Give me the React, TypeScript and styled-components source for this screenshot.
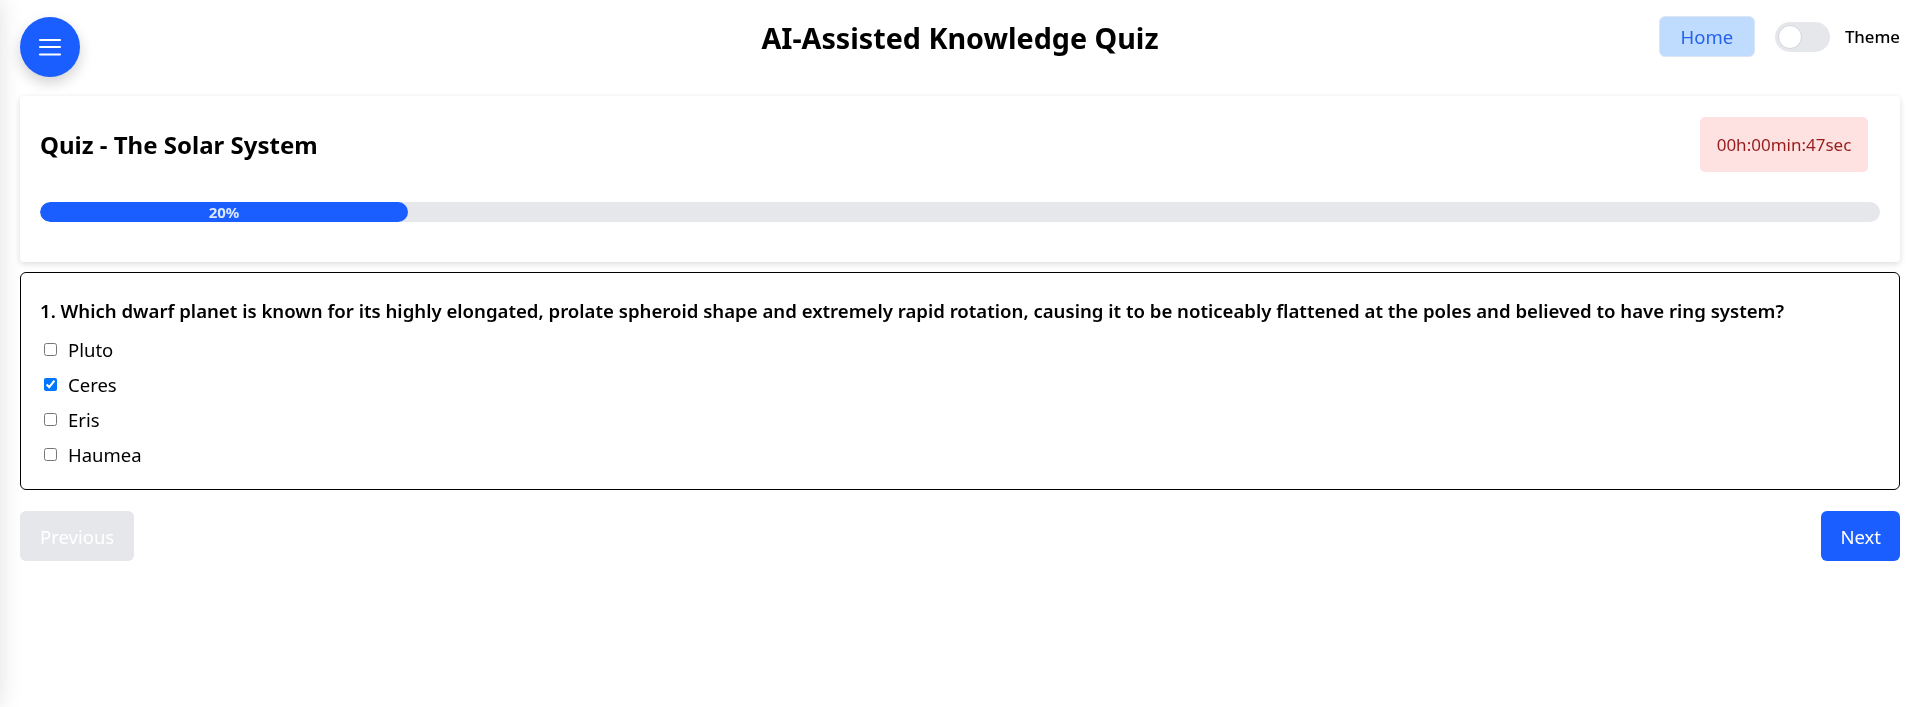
import React, { useState } from "react";
import styled, { createGlobalStyle } from "styled-components";

const GlobalStyle = createGlobalStyle`
  body {
    margin: 0;
    background: #ffffff;
    font-family: "Noto Sans", "Open Sans", sans-serif;
    color: #000;
  }
  * { box-sizing: border-box; }
`;

const Page = styled.div`
  position: relative;
  min-height: 100vh;
  padding: 0 16px 0 20px;
`;

// offscreen drawer, only its shadow shows at the left edge
const Drawer = styled.aside`
  position: fixed;
  top: 0;
  left: -280px;
  width: 280px;
  height: 100vh;
  background: #fff;
  box-shadow: 0 0 22px rgba(0, 0, 0, 0.12);
`;

const MenuButton = styled.button`
  position: absolute;
  top: 17px;
  left: 20px;
  width: 60px;
  height: 60px;
  border: none;
  border-radius: 50%;
  background: #1a5eff;
  display: flex;
  align-items: center;
  justify-content: center;
  box-shadow: 0 6px 14px rgba(0, 0, 0, 0.18);
  cursor: pointer;
  z-index: 2;
`;

const Header = styled.header`
  height: 96px;
  padding-top: 16px;
  display: grid;
  grid-template-columns: 1fr auto 1fr;
  align-items: start;
`;

const Title = styled.h1`
  grid-column: 2;
  margin: 0;
  font-size: 28.7px;
  line-height: 44px;
  font-weight: 700;
`;

const Controls = styled.div`
  grid-column: 3;
  justify-self: end;
  display: flex;
  align-items: center;
`;

const HomeButton = styled.button`
  width: 96px;
  height: 41px;
  border: 1px solid #dbe6f5;
  border-radius: 6px;
  background: #bfdbfe;
  color: #2563eb;
  font-family: inherit;
  font-size: 18.5px;
  cursor: pointer;
`;

const Switch = styled.button<{ $on: boolean }>`
  position: relative;
  width: 55px;
  height: 30px;
  margin-left: 20px;
  border: none;
  border-radius: 15px;
  background: ${(p) => (p.$on ? "#1a5eff" : "#e5e7eb")};
  padding: 0;
  cursor: pointer;
`;

const Knob = styled.span<{ $on: boolean }>`
  position: absolute;
  top: 3px;
  left: ${(p) => (p.$on ? "28px" : "3px")};
  width: 24px;
  height: 24px;
  border-radius: 50%;
  background: #fff;
  border: 1px solid #d1d5db;
`;

const ThemeLabel = styled.span`
  margin-left: 15px;
  font-size: 16.8px;
  font-weight: 500;
`;

const Card = styled.section`
  background: #fff;
  padding: 21px 20px 40px;
  box-shadow: 0 2px 6px rgba(0, 0, 0, 0.14);
  border-radius: 4px;
`;

const CardHead = styled.div`
  display: flex;
  align-items: center;
  justify-content: space-between;
  padding-right: 12px;
  margin-bottom: 30px;
`;

const QuizTitle = styled.h2`
  margin: 0;
  font-size: 24px;
  font-weight: 700;
`;

const Timer = styled.div`
  width: 168px;
  height: 55px;
  display: flex;
  align-items: center;
  justify-content: center;
  border-radius: 5px;
  background: #fee2e2;
  color: #991b1b;
  font-size: 17px;
`;

const Track = styled.div`
  height: 20px;
  border-radius: 10px;
  background: #e5e7eb;
  overflow: hidden;
`;

const Fill = styled.div`
  height: 100%;
  border-radius: 10px;
  background: #1a5eff;
  color: #dbe7ff;
  font-size: 15px;
  font-weight: 700;
  display: flex;
  align-items: center;
  justify-content: center;
`;

const QuestionCard = styled.section`
  margin-top: 10px;
  border: 1px solid #000;
  border-radius: 6px;
  padding: 24px 19px 17px;
`;

const QuestionText = styled.p`
  margin: 0 0 8px;
  font-size: 18.6px;
  line-height: 27px;
  font-weight: 600;
`;

const Option = styled.label`
  height: 35px;
  display: flex;
  align-items: center;
  font-size: 18.5px;
  cursor: pointer;
`;

const Check = styled.input`
  width: 13px;
  height: 13px;
  margin: 0 3px 0 4px;
`;

const OptionText = styled.span`
  margin-left: 8px;
`;

const Nav = styled.div`
  margin-top: 21px;
  display: flex;
  justify-content: space-between;
`;

const NavButton = styled.button<{ $primary?: boolean }>`
  height: 50px;
  padding: 0 ${(p) => (p.$primary ? "19px" : "20px")};
  border: none;
  border-radius: 6px;
  background: ${(p) => (p.$primary ? "#1a5eff" : "#e5e7eb")};
  color: #fff;
  font-family: inherit;
  font-size: 18.5px;
  cursor: ${(p) => (p.$primary ? "pointer" : "default")};
`;

const options = ["Pluto", "Ceres", "Eris", "Haumea"];

const HamburgerIcon = () => (
  <svg width="24" height="18" viewBox="0 0 24 18" fill="none">
    <g stroke="#fff" strokeWidth="2.2" strokeLinecap="round">
      <line x1="2" y1="2" x2="22" y2="2" />
      <line x1="2" y1="9" x2="22" y2="9" />
      <line x1="2" y1="16.5" x2="22" y2="16.5" />
    </g>
  </svg>
);

const App = () => {
  const [dark, setDark] = useState(false);
  const [picked, setPicked] = useState("Ceres");
  const progress = 20;

  return (
    <>
      <GlobalStyle />
      <Drawer />
      <Page>
        <MenuButton aria-label="menu">
          <HamburgerIcon />
        </MenuButton>
        <Header>
          <Title>AI-Assisted Knowledge Quiz</Title>
          <Controls>
            <HomeButton>Home</HomeButton>
            <Switch $on={dark} onClick={() => setDark(!dark)}>
              <Knob $on={dark} />
            </Switch>
            <ThemeLabel>Theme</ThemeLabel>
          </Controls>
        </Header>

        <Card>
          <CardHead>
            <QuizTitle>Quiz - The Solar System</QuizTitle>
            <Timer>00h:00min:47sec</Timer>
          </CardHead>
          <Track>
            <Fill style={{ width: `${progress}%` }}>{progress}%</Fill>
          </Track>
        </Card>

        <QuestionCard>
          <QuestionText>
            1. Which dwarf planet is known for its highly elongated, prolate spheroid shape and extremely rapid
            rotation, causing it to be noticeably flattened at the poles and believed to have ring system?
          </QuestionText>
          {options.map((o) => (
            <Option key={o}>
              <Check type="checkbox" checked={picked === o} onChange={() => setPicked(o)} />
              <OptionText>{o}</OptionText>
            </Option>
          ))}
        </QuestionCard>

        <Nav>
          <NavButton disabled>Previous</NavButton>
          <NavButton $primary>Next</NavButton>
        </Nav>
      </Page>
    </>
  );
};

export default App;
